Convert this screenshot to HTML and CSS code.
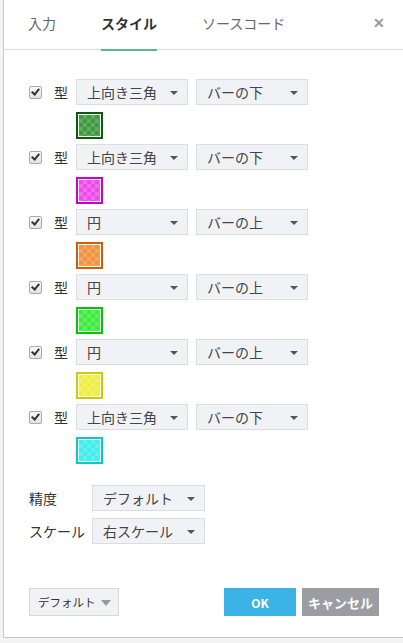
FILE: index.html
```html
<!DOCTYPE html>
<html lang="ja">
<head>
    <meta charset="UTF-8">
    <meta name="viewport" content="width=device-width, initial-scale=1.0">
    <title>スタイル</title>
    <link rel="stylesheet" href="styles.css">
</head>
<body>

    <div class="backdrop">
        <div class="dialog">
            <!-- Tabs -->
            <div class="tabs">
                <div class="tab">入力</div>
                <div class="tab active">スタイル</div>
                <div class="tab">ソースコード</div>
                <div class="close">&#x2715;</div>
            </div>

            <div class="content">
                <div class="series">
                    <div class="row">
                        <span class="check"></span>
                        <span class="label">型</span>
                        <div class="select">上向き三角</div>
                        <div class="select">バーの下</div>
                    </div>
                    <div class="swatch green"></div>
                </div>
                <div class="series">
                    <div class="row">
                        <span class="check"></span>
                        <span class="label">型</span>
                        <div class="select">上向き三角</div>
                        <div class="select">バーの下</div>
                    </div>
                    <div class="swatch magenta"></div>
                </div>
                <div class="series">
                    <div class="row">
                        <span class="check"></span>
                        <span class="label">型</span>
                        <div class="select">円</div>
                        <div class="select">バーの上</div>
                    </div>
                    <div class="swatch orange"></div>
                </div>
                <div class="series">
                    <div class="row">
                        <span class="check"></span>
                        <span class="label">型</span>
                        <div class="select">円</div>
                        <div class="select">バーの上</div>
                    </div>
                    <div class="swatch lime"></div>
                </div>
                <div class="series">
                    <div class="row">
                        <span class="check"></span>
                        <span class="label">型</span>
                        <div class="select">円</div>
                        <div class="select">バーの上</div>
                    </div>
                    <div class="swatch yellow"></div>
                </div>
                <div class="series">
                    <div class="row">
                        <span class="check"></span>
                        <span class="label">型</span>
                        <div class="select">上向き三角</div>
                        <div class="select">バーの下</div>
                    </div>
                    <div class="swatch cyan"></div>
                </div>

                <div class="options">
                    <div class="option">
                        <span class="opt-label">精度</span>
                        <div class="select">デフォルト</div>
                    </div>
                    <div class="option">
                        <span class="opt-label">スケール</span>
                        <div class="select">右スケール</div>
                    </div>
                </div>
            </div>

            <!-- Footer buttons -->
            <div class="footer">
                <div class="btn-default">デフォルト</div>
                <div class="spacer"></div>
                <button class="btn-ok">OK</button>
                <button class="btn-cancel">キャンセル</button>
            </div>
        </div>
    </div>

</body>
</html>
```

FILE: styles.css
```css
body {
    margin: 0;
    font-family: "Noto Sans CJK JP", "Noto Sans", sans-serif;
    color: #333;
    background: #fff;
    overflow: hidden;
}
.backdrop {
    width: 403px;
    height: 643px;
    background: #f4f4f4;
    position: relative;
}
.dialog {
    position: absolute;
    left: 3px;
    top: 0;
    width: 420px;
    height: 638px;
    background: #fff;
    border-left: 1px solid #c8c8c8;
    border-bottom: 1px solid #c8c8c8;
    box-sizing: border-box;
}

/* tabs */
.tabs {
    display: flex;
    align-items: flex-start;
    height: 50px;
    border-bottom: 1px solid #dcdcdc;
    padding-left: 24px;
    box-sizing: border-box;
    position: relative;
}
.tab {
    font-size: 14px;
    color: #666;
    padding-top: 12px;
    height: 37px;
    margin-right: 45px;
    line-height: 22px;
}
.tab.active {
    font-weight: bold;
    color: #333;
    border-bottom: 2px solid #5bb98b;
}
.close {
    position: absolute;
    left: 369px;
    top: 12px;
    font-size: 14px;
    font-weight: bold;
    color: #999;
}

/* series rows */
.content {
    padding: 29px 0 0 25px;
}
.series {
    height: 65px;
}
.row {
    display: flex;
    align-items: center;
    height: 26px;
}
.check {
    width: 11px;
    height: 11px;
    border: 1px solid #aaa;
    border-radius: 2px;
    background: linear-gradient(#fafafa, #e2e2e2);
    margin-right: 12px;
    position: relative;
}
.check::after {
    content: "";
    position: absolute;
    left: 3px;
    top: 0px;
    width: 3px;
    height: 6px;
    border: solid #333;
    border-width: 0 2px 2px 0;
    transform: rotate(40deg);
}
.label {
    font-size: 14px;
    width: 22px;
}
.select {
    width: 112px;
    height: 26px;
    box-sizing: border-box;
    border: 1px solid #dcdde0;
    background: #f1f2f6;
    font-size: 14px;
    line-height: 24px;
    padding-left: 10px;
    color: #444;
    margin-right: 8px;
    position: relative;
}
.select::after {
    content: "";
    position: absolute;
    right: 9px;
    top: 11px;
    border-left: 4px solid transparent;
    border-right: 4px solid transparent;
    border-top: 4px solid #555;
}

/* colour swatches */
.swatch {
    margin: 7px 0 0 47px;
    width: 27px;
    height: 27px;
    box-sizing: border-box;
    border: 2px solid;
    box-shadow: inset 0 0 0 1px #fff;
    background-image: conic-gradient(rgba(255,255,255,0.18) 25%, transparent 0 50%, rgba(255,255,255,0.18) 0 75%, transparent 0);
    background-size: 8px 8px;
    background-position: 1px 1px;
}
.green { background-color: #3e9a3e; border-color: #0a5e0a; }
.magenta { background-color: #ee4aee; border-color: #cc00cc; }
.orange { background-color: #f09440; border-color: #d55a00; }
.lime { background-color: #3ced3c; border-color: #00c800; }
.yellow { background-color: #eeee40; border-color: #cccc00; }
.cyan { background-color: #40eeee; border-color: #00cccc; }

/* precision / scale */
.options {
    margin-top: 16px;
}
.option {
    display: flex;
    align-items: center;
    margin-bottom: 7px;
}
.opt-label {
    font-size: 14px;
    width: 63px;
}
.option .select {
    width: 113px;
}

/* footer */
.footer {
    display: flex;
    align-items: center;
    margin-top: 44px;
    padding-left: 25px;
    width: 375px;
    box-sizing: border-box;
}
.btn-default {
    width: 90px;
    height: 28px;
    box-sizing: border-box;
    border: 1px solid #d8d9dc;
    background: #f1f2f6;
    font-size: 11.5px;
    line-height: 26px;
    padding-left: 8px;
    color: #333;
    position: relative;
}
.btn-default::after {
    content: "";
    position: absolute;
    right: 7px;
    top: 11px;
    border-left: 5px solid transparent;
    border-right: 5px solid transparent;
    border-top: 6px solid #999;
}
.spacer { flex: 1; }
button {
    height: 28px;
    border: none;
    color: #fff;
    font-family: inherit;
    font-size: 12px;
    font-weight: bold;
    padding: 0;
}
.btn-ok { width: 72px; background: #3bb4e5; margin-right: 6px; }
.btn-cancel { width: 77px; background: #9b9da2; font-size: 13px; }
```
